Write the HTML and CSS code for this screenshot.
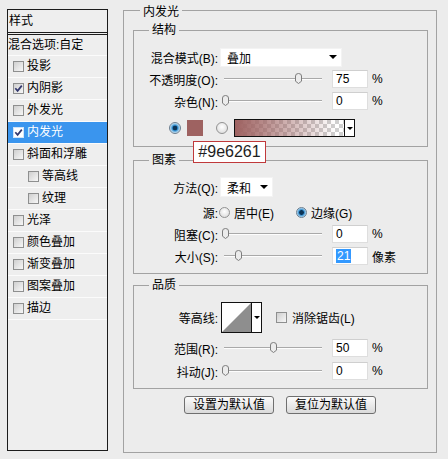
FILE: index.html
```html
<!DOCTYPE html>
<html lang="zh-CN">
<head>
<meta charset="utf-8">
<title>图层样式 - 内发光</title>
<link rel="stylesheet" href="styles.css">
</head>
<body>
<div class="dialog">
  <div class="styles-panel">
    <div class="panel-title">样式</div>
    <div class="panel-item blend">混合选项:自定</div>
    <div class="panel-item"><span class="cb"></span>投影</div>
    <div class="panel-item"><span class="cb"><svg width="9" height="9" viewBox="0 0 9 9"><path d="M1.3 4.3 L3.6 6.9 L7.8 1.6" fill="none" stroke="#33386e" stroke-width="1.7"/></svg></span>内阴影</div>
    <div class="panel-item"><span class="cb"></span>外发光</div>
    <div class="panel-item active"><span class="cb white"><svg width="9" height="9" viewBox="0 0 9 9"><path d="M1.3 4.3 L3.6 6.9 L7.8 1.6" fill="none" stroke="#33386e" stroke-width="1.7"/></svg></span>内发光</div>
    <div class="panel-item"><span class="cb"></span>斜面和浮雕</div>
    <div class="panel-item sub"><span class="cb"></span>等高线</div>
    <div class="panel-item sub"><span class="cb"></span>纹理</div>
    <div class="panel-item"><span class="cb"></span>光泽</div>
    <div class="panel-item"><span class="cb"></span>颜色叠加</div>
    <div class="panel-item"><span class="cb"></span>渐变叠加</div>
    <div class="panel-item"><span class="cb"></span>图案叠加</div>
    <div class="panel-item"><span class="cb"></span>描边</div>
  </div>

  <fieldset class="group outer">
    <legend>内发光</legend>

    <fieldset class="group sub structure">
      <legend>结构</legend>
      <div class="row">
        <span class="lbl">混合模式(B):</span>
        <div class="select wide"><span>叠加</span><span class="arrow"></span></div>
      </div>
      <div class="row">
        <span class="lbl">不透明度(O):</span>
        <div class="slider"><span class="thumb" style="left:75px"><svg width="7" height="11" viewBox="0 0 7 11"><path d="M0.5 3 Q0.5 0.5 3.5 0.5 Q6.5 0.5 6.5 3 V8.2 L3.5 10.5 L0.5 8.2 Z" fill="#ececec" stroke="#7d7d7d"/></svg></span></div>
        <span class="num">75</span><span class="unit">%</span>
      </div>
      <div class="row">
        <span class="lbl">杂色(N):</span>
        <div class="slider"><span class="thumb" style="left:2px"><svg width="7" height="11" viewBox="0 0 7 11"><path d="M0.5 3 Q0.5 0.5 3.5 0.5 Q6.5 0.5 6.5 3 V8.2 L3.5 10.5 L0.5 8.2 Z" fill="#ececec" stroke="#7d7d7d"/></svg></span></div>
        <span class="num">0</span><span class="unit">%</span>
      </div>
      <div class="color-row">
        <span class="radio on"></span>
        <span class="swatch"></span>
        <span class="radio"></span>
        <div class="gradient"><span class="fill"></span><span class="drop"><span class="arrow small"></span></span></div>
      </div>
    </fieldset>

    <fieldset class="group sub elements">
      <legend>图素</legend>
      <div class="row">
        <span class="lbl">方法(Q):</span>
        <div class="select narrow"><span>柔和</span><span class="arrow"></span></div>
      </div>
      <div class="row src-row">
        <span class="lbl">源:</span>
        <span class="opt opt1"><span class="radio sm"></span><span class="opt-text">居中(E)</span></span>
        <span class="opt"><span class="radio sm on"></span><span class="opt-text">边缘(G)</span></span>
      </div>
      <div class="row">
        <span class="lbl">阻塞(C):</span>
        <div class="slider"><span class="thumb" style="left:2px"><svg width="7" height="11" viewBox="0 0 7 11"><path d="M0.5 3 Q0.5 0.5 3.5 0.5 Q6.5 0.5 6.5 3 V8.2 L3.5 10.5 L0.5 8.2 Z" fill="#ececec" stroke="#7d7d7d"/></svg></span></div>
        <span class="num">0</span><span class="unit">%</span>
      </div>
      <div class="row">
        <span class="lbl">大小(S):</span>
        <div class="slider"><span class="thumb" style="left:15px"><svg width="7" height="11" viewBox="0 0 7 11"><path d="M0.5 3 Q0.5 0.5 3.5 0.5 Q6.5 0.5 6.5 3 V8.2 L3.5 10.5 L0.5 8.2 Z" fill="#ececec" stroke="#7d7d7d"/></svg></span></div>
        <span class="num"><span class="sel">21</span></span><span class="unit">像素</span>
      </div>
    </fieldset>

    <fieldset class="group sub quality">
      <legend>品质</legend>
      <div class="row contour-row">
        <span class="lbl">等高线:</span>
        <div class="contour">
          <svg class="graph" width="29" height="29" viewBox="0 0 29 29"><polygon points="0,29 29,0 29,29" fill="#8e8e8e"/></svg>
          <span class="drop"><span class="arrow small"></span></span>
        </div>
        <span class="cb aa"></span><span>消除锯齿(L)</span>
      </div>
      <div class="row range-row">
        <span class="lbl">范围(R):</span>
        <div class="slider"><span class="thumb" style="left:50px"><svg width="7" height="11" viewBox="0 0 7 11"><path d="M0.5 3 Q0.5 0.5 3.5 0.5 Q6.5 0.5 6.5 3 V8.2 L3.5 10.5 L0.5 8.2 Z" fill="#ececec" stroke="#7d7d7d"/></svg></span></div>
        <span class="num">50</span><span class="unit">%</span>
      </div>
      <div class="row jitter-row">
        <span class="lbl">抖动(J):</span>
        <div class="slider"><span class="thumb" style="left:2px"><svg width="7" height="11" viewBox="0 0 7 11"><path d="M0.5 3 Q0.5 0.5 3.5 0.5 Q6.5 0.5 6.5 3 V8.2 L3.5 10.5 L0.5 8.2 Z" fill="#ececec" stroke="#7d7d7d"/></svg></span></div>
        <span class="num">0</span><span class="unit">%</span>
      </div>
    </fieldset>

    <div class="buttons">
      <button class="btn">设置为默认值</button>
      <button class="btn">复位为默认值</button>
    </div>
  </fieldset>

  <div class="tooltip">#9e6261</div>
</div>
</body>
</html>
```
FILE: styles.css
```css
* { box-sizing: border-box; }

body {
  margin: 0;
  background: #ececec;
  font-family: "Liberation Sans", "Noto Sans CJK SC", sans-serif;
  font-size: 12px;
  color: #000;
}

.dialog {
  position: relative;
  display: flex;
  align-items: flex-start;
  width: 448px;
  height: 459px;
}

/* ---------- left styles list ---------- */
.styles-panel {
  margin: 9px 0 0 7px;
  width: 101px;
  height: 442px;
  border: 1px solid #1c1c1c;
  background: #eeeeee;
  flex: none;
}

.panel-title {
  height: 25px;
  line-height: 22px;
  padding-left: 1px;
  border-bottom: 3px double #1c1c1c;
}

.panel-item {
  display: flex;
  align-items: center;
  height: 22px;
  line-height: 21px;
  padding-left: 5px;
  border-bottom: 1px solid #fbfbfb;
  white-space: nowrap;
}

.panel-item.blend {
  height: 21px;
  padding-left: 0;
}

.panel-item.sub { padding-left: 20px; }

.panel-item.active {
  background: #3a95ee;
  color: #fff;
}

.cb {
  flex: none;
  width: 11px;
  height: 11px;
  margin-right: 3px;
  border: 1px solid #8e8f8f;
  background: linear-gradient(135deg, #cfcfcf, #f7f7f7);
  display: flex;
  align-items: center;
  justify-content: center;
}

.cb.white { background: #fff; border-color: #d0e4f8; }

/* ---------- fieldsets ---------- */
.group {
  margin: 0;
  padding: 0;
  border: 1px solid #a2a2a2;
  min-width: 0;
}

.group legend {
  padding: 0 3px;
  line-height: 14px;
  font-size: 12px;
}

.outer {
  margin: 1px 0 0 15px;
  width: 314px;
  padding: 4px 0 38px;
  flex: none;
}

.outer > legend {
  margin-left: 16px;
  padding: 4px 3px 0;
}

.group.sub { margin: 0 8px 0 9px; }
.group.sub > legend { margin-left: 15px; }

.structure { padding: 9px 0 6px; }
.group.sub.elements { margin-top: 6px; padding: 9px 0 6px; }
.group.sub.quality { margin-top: 4px; padding: 10px 0 6px; }

/* ---------- rows ---------- */
.row {
  display: flex;
  align-items: center;
  height: 22px;
  white-space: nowrap;
}

.lbl {
  flex: none;
  width: 84px;
  margin-right: 2px;
  text-align: right;
}

.select {
  flex: none;
  height: 20px;
  background: #fff;
  border: 1px solid #f3f3f3;
  display: flex;
  align-items: center;
  justify-content: space-between;
  padding: 0 4px 0 6px;
}

.select.wide { width: 122px; height: 19px; }
.select.narrow { width: 53px; }

.arrow {
  width: 0;
  height: 0;
  border-left: 4px solid transparent;
  border-right: 4px solid transparent;
  border-top: 4px solid #000;
}

.arrow.small {
  border-left-width: 3px;
  border-right-width: 3px;
  border-top-width: 3px;
}

.slider {
  flex: none;
  position: relative;
  width: 102px;
  height: 20px;
  margin-right: 10px;
  background:
    linear-gradient(#a9a9a9, #a9a9a9) 4px 9px / 98px 1px no-repeat,
    linear-gradient(#fdfdfd, #fdfdfd) 4px 10px / 98px 1px no-repeat;
}

.thumb {
  position: absolute;
  top: 4px;
  width: 7px;
  height: 11px;
  display: block;
}

.thumb svg { display: block; }

.num {
  flex: none;
  width: 36px;
  height: 18px;
  background: #fff;
  border: 1px solid #dedede;
  border-top-color: #cfcfcf;
  padding-left: 3px;
  line-height: 16px;
}

.sel {
  background: #3399ff;
  color: #fff;
  padding: 0 1px;
}

.unit { margin-left: 4px; }

/* ---------- colour row ---------- */
.color-row {
  display: flex;
  align-items: center;
  height: 24px;
  margin-top: 4px;
  padding-left: 35px;
}

.radio {
  flex: none;
  width: 12px;
  height: 12px;
  border-radius: 50%;
  border: 1px solid #929292;
  background: radial-gradient(circle at 50% 40%, #ffffff, #d6d6d6);
}

.radio.on {
  border-color: #6c7f90;
  background: radial-gradient(circle, #0d3456 0 2px, #2a86c8 2.6px, #8fc4e8 4px, #e4eef5 5.5px);
}

.radio.sm { width: 11px; height: 11px; }

.color-row .radio.on { margin-right: 6px; }
.color-row .radio:not(.on) { margin-right: 6px; }

.swatch {
  flex: none;
  width: 16px;
  height: 16px;
  background: #9e6261;
  margin-right: 13px;
}

.gradient {
  flex: none;
  width: 121px;
  height: 18px;
  border: 1px solid #111;
  display: flex;
}

.gradient .fill {
  flex: 1;
  background:
    linear-gradient(to right, #9e6261 0%, rgba(158, 98, 97, 0.75) 25%, rgba(158, 98, 97, 0) 92%),
    conic-gradient(#cfcfcf 25%, #ffffff 0 50%, #cfcfcf 0 75%, #ffffff 0) 0 0 / 8px 8px;
}

.drop {
  flex: none;
  width: 10px;
  border-left: 1px solid #111;
  background: #fff;
  display: flex;
  align-items: center;
  justify-content: center;
}

/* ---------- source row ---------- */
.src-row { margin-top: 3px; }

.opt {
  display: flex;
  align-items: center;
}

.opt1 { width: 77px; margin-left: -1px; }

.opt-text { margin-left: 4px; }

/* ---------- quality ---------- */
.contour-row { height: 31px; }

.contour {
  flex: none;
  width: 41px;
  height: 31px;
  margin-left: 1px;
  border: 1px solid #111;
  background: #fff;
  display: flex;
}

.contour .graph { display: block; }

.cb.aa {
  margin-left: 14px;
  margin-right: 5px;
}

.range-row { margin-top: 4px; }
.jitter-row { margin-top: 1px; }

/* ---------- buttons ---------- */
.buttons {
  display: flex;
  justify-content: center;
  gap: 12px;
  margin-top: 7px;
}

.btn {
  width: 90px;
  height: 18px;
  padding: 0;
  border: 1px solid #6f6f6f;
  border-radius: 3px;
  background: linear-gradient(#fbfbfb, #dadada);
  font: inherit;
  line-height: 16px;
  color: #000;
}

/* ---------- tooltip ---------- */
.tooltip {
  position: absolute;
  left: 193px;
  top: 141px;
  width: 73px;
  height: 22px;
  border: 1px solid #c0393b;
  background: #fff;
  font-size: 16px;
  line-height: 20px;
  text-align: center;
  color: #1e1e1e;
}
```
